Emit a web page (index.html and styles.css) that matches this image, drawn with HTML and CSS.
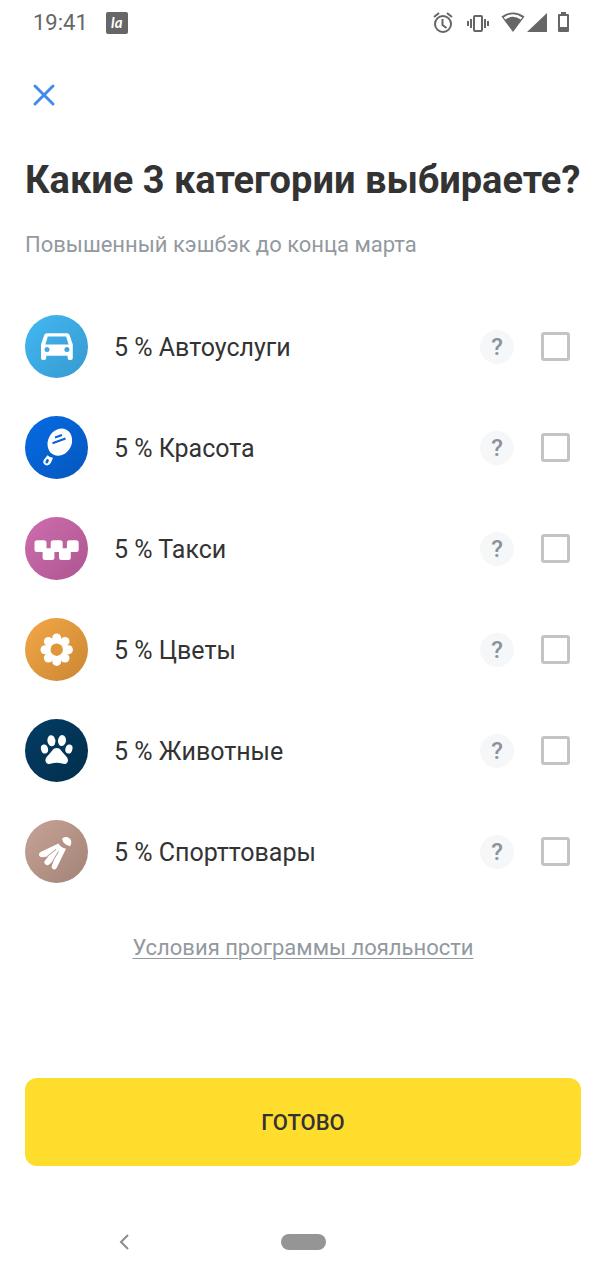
FILE: index.html
```html
<!DOCTYPE html>
<html lang="ru">
<head>
<meta charset="utf-8">
<meta name="viewport" content="width=device-width, initial-scale=1">
<title>Категории кэшбэка</title>
<link rel="stylesheet" href="styles.css">
</head>
<body>
<div class="screen">
  <header class="status">
    <div class="status-group">
      <time class="clock">19:41</time>
      <span class="badge">la</span>
    </div>
    <svg class="status-icons" width="140" height="24" viewBox="0 0 140 24" aria-hidden="true">
      <g fill="none" stroke="#666" stroke-width="2">
        <circle cx="13" cy="13" r="8"/>
        <path d="M12.500 8v6l4 3M4 6l5-4M22 6l-5-4"/>
        <rect x="44" y="5" width="8" height="15" rx="1"/>
        <path d="M41 8v9M38 10v5M55 8v9M58 10v5"/>
        <path d="M129 4h9v16h-9z" stroke-linejoin="round"/>
      </g>
      <g fill="#666">
        <path d="M71.500 5.500Q83-2.500 94.500 5.500L83 21z"/>
        <path d="M97 21L117 2v19zM131 1h5v3h-5zM128 16h11v4h-11z"/>
      </g>
      <path d="M74.500 7.500Q83 1.500 91.500 7.500" fill="none" stroke="#fff" stroke-width="2.500"/>
    </svg>
  </header>
  <main class="content">
    <button class="close" type="button" aria-label="Закрыть">
      <svg width="24" height="24" viewBox="0 0 24 24"><path d="M3 3l18 18M21 3L3 21" stroke="#438bea" stroke-width="3" stroke-linecap="round"/></svg>
    </button>
    <h1 class="title">Какие 3 категории выбираете?</h1>
    <p class="subtitle">Повышенный кэшбэк до конца марта</p>
    <ul class="list">
      <li class="row">
        <svg class="icon icon-auto" viewBox="0 0 63 63" aria-hidden="true">
          <path fill="#fff" fill-rule="evenodd" d="M22 18.200h20q2 0 2.600 1.800l3.200 9.500V43q0 2-2 2h-1.200q-2 0-2-2v-2.200H21.200V43q0 2-2 2H18q-2 0-2-2V29.500l3.300-9.500q.6-1.800 2.700-1.800zM22.800 21.500l-2.500 8h23.300l-2.500-8zM22 32a2.500 2.500 0 1 0 0 5 2.500 2.500 0 0 0 0-5zM41.900 32a2.500 2.500 0 1 0 0 5 2.500 2.500 0 0 0 0-5z"/>
        </svg>
        <label class="name" for="c1">5 % Автоуслуги</label>
        <button class="help" type="button" aria-label="Подробнее: Автоуслуги">?</button>
        <input class="check" id="c1" type="checkbox">
      </li>
      <li class="row">
        <svg class="icon icon-beauty" viewBox="0 0 63 63" aria-hidden="true">
          <ellipse cx="34.800" cy="26.200" rx="11.800" ry="14" transform="rotate(28 34.800 26.200)" fill="#fff"/>
          <path d="M30 21.500l7-2.500M27.500 27.300l13-4.800" stroke="#0765d8" stroke-width="2"/>
          <path d="M22.500 39.300Q24.500 41.500 28 41.800L25.800 47Q23.500 50.500 20.300 49Q17.300 47.300 18.700 44z" fill="#fff"/>
          <path d="M22.500 44.500l-.7 1.500" stroke="#0765d8" stroke-width="2.800" stroke-linecap="round"/>
        </svg>
        <label class="name" for="c2">5 % Красота</label>
        <button class="help" type="button" aria-label="Подробнее: Красота">?</button>
        <input class="check" id="c2" type="checkbox">
      </li>
      <li class="row">
        <svg class="icon icon-taxi" viewBox="0 0 63 63" aria-hidden="true">
          <g fill="#fff">
            <rect x="9.500" y="23.300" width="12" height="11.700" rx="2.500"/>
            <rect x="25.700" y="23.300" width="12" height="11.700" rx="2.500"/>
            <rect x="41.900" y="23.300" width="11.800" height="11.700" rx="2.500"/>
            <rect x="17.600" y="31.200" width="11.800" height="11.800" rx="2.500"/>
            <rect x="34" y="31.200" width="11.800" height="11.800" rx="2.500"/>
          </g>
        </svg>
        <label class="name" for="c3">5 % Такси</label>
        <button class="help" type="button" aria-label="Подробнее: Такси">?</button>
        <input class="check" id="c3" type="checkbox">
      </li>
      <li class="row">
        <svg class="icon icon-flowers" viewBox="0 0 63 63" aria-hidden="true">
          <g fill="#fff">
            <circle cx="31.700" cy="20" r="4.500"/><circle cx="40" cy="23.400" r="4.500"/>
            <circle cx="43.400" cy="31.700" r="4.500"/><circle cx="40" cy="40" r="4.500"/>
            <circle cx="31.700" cy="43.400" r="4.500"/><circle cx="23.400" cy="40" r="4.500"/>
            <circle cx="20" cy="31.700" r="4.500"/><circle cx="23.400" cy="23.400" r="4.500"/>
            <circle cx="31.700" cy="31.700" r="11.500"/>
          </g>
          <circle cx="31.700" cy="31.700" r="6.200" fill="#e0973a"/>
        </svg>
        <label class="name" for="c4">5 % Цветы</label>
        <button class="help" type="button" aria-label="Подробнее: Цветы">?</button>
        <input class="check" id="c4" type="checkbox">
      </li>
      <li class="row">
        <svg class="icon icon-pets" viewBox="0 0 63 63" aria-hidden="true">
          <g fill="#fff">
            <ellipse cx="19.500" cy="30" rx="3.500" ry="4.600" transform="rotate(-15 19.500 30)"/>
            <ellipse cx="26.400" cy="21.800" rx="4" ry="5.500" transform="rotate(-8 26.400 21.800)"/>
            <ellipse cx="37" cy="21.600" rx="4" ry="5.500" transform="rotate(8 37 21.600)"/>
            <ellipse cx="43.900" cy="30" rx="3.500" ry="4.600" transform="rotate(15 43.900 30)"/>
            <path d="M31.700 29C35.500 29 36.500 32.500 39.500 35.500C42 38 43.300 39.500 42.900 42C42.400 45 39.500 45.500 37 44.600Q31.700 43 26.400 44.600C24 45.500 21 45 20.500 42C20.100 39.500 21.400 38 23.900 35.500C26.900 32.500 27.900 29 31.700 29z"/>
          </g>
        </svg>
        <label class="name" for="c5">5 % Животные</label>
        <button class="help" type="button" aria-label="Подробнее: Животные">?</button>
        <input class="check" id="c5" type="checkbox">
      </li>
      <li class="row">
        <svg class="icon icon-sport" viewBox="0 0 63 63" aria-hidden="true">
          <g fill="#fff">
            <path d="M37 19C38.500 16.300 42.500 16.300 45 18.800C47 21.500 46.500 24.500 44.800 26.200Q38.500 24.500 37 19z"/>
            <path d="M33.500 23.500Q36 27.800 41 28.800L31.800 47.800Q30.500 50.300 28.200 49.300Q26 48.200 26.800 45.700L29 40L24.500 44.300Q22.300 46 20.300 44.300Q18.500 42.500 20.200 40.200L23.500 36.300L17.500 37.300Q15 37.500 14 35.500Q13.500 33.300 15.500 32z"/>
          </g>
          <path d="M31 29.500L22 36.500M33.500 31.500L27.500 41.500" fill="none" stroke="#b8968a" stroke-width="1"/>
        </svg>
        <label class="name" for="c6">5 % Спорттовары</label>
        <button class="help" type="button" aria-label="Подробнее: Спорттовары">?</button>
        <input class="check" id="c6" type="checkbox">
      </li>
    </ul>
    <a class="terms" href="#">Условия программы лояльности</a>
    <button class="done" type="button">ГОТОВО</button>
  </main>
  <nav class="navbar">
    <button class="back" type="button" aria-label="Назад">
      <svg width="12" height="18" viewBox="0 0 12 18"><path d="M10 2L3 9l7 7" fill="none" stroke="#8c8c8c" stroke-width="2"/></svg>
    </button>
    <button class="home" type="button" aria-label="Домой"></button>
  </nav>
</div>
</body>
</html>
```

FILE: styles.css
```css
* { box-sizing: border-box; }
body {
  margin: 0;
  background: #fff;
  color: #333;
  font-family: Roboto, "Noto Sans", sans-serif;
}
button {
  padding: 0;
  border: 0;
  background: none;
  font: inherit;
  color: inherit;
}
.screen {
  display: flex;
  flex-direction: column;
  min-height: 100vh;
}
.status {
  display: flex;
  justify-content: space-between;
  align-items: center;
  height: 45px;
  padding: 0 36px 0 33px;
}
.status-group {
  display: flex;
  align-items: center;
  gap: 18px;
}
.clock {
  font-size: 22px;
  color: #666;
}
.badge {
  width: 22px;
  height: 22px;
  border-radius: 2px;
  background: #666;
  color: #fff;
  font: italic 700 15px/20px Lato, sans-serif;
  text-align: center;
}
.status-icons { display: block; }
.content {
  display: flex;
  flex-direction: column;
  flex: 1;
  padding: 38px 25px 0;
}
.close {
  width: 24px;
  height: 24px;
  margin-left: 7px;
}
.close svg, .back svg { display: block; }
.title {
  margin: 50px 0 0;
  font-size: 38px;
  line-height: 46px;
  font-weight: 700;
  white-space: nowrap;
}
.subtitle {
  margin: 28px 0 0;
  font-size: 22px;
  line-height: 28px;
  color: #9299a0;
}
.list {
  display: flex;
  flex-direction: column;
  gap: 38px;
  margin: 56px 0 0;
  padding: 0;
  list-style: none;
}
.row {
  display: flex;
  align-items: center;
  padding-right: 11px;
}
.icon {
  flex: none;
  width: 63px;
  height: 63px;
  border-radius: 50%;
}
.icon-auto { background: linear-gradient(135deg, #42b8f2, #3799d0); }
.icon-beauty { background: linear-gradient(135deg, #056be5, #0557bd); }
.icon-taxi { background: linear-gradient(135deg, #ce6dae, #ac5690); }
.icon-flowers { background: linear-gradient(135deg, #f3a847, #ca8632); }
.icon-pets { background: linear-gradient(135deg, #033c63, #022f4d); }
.icon-sport { background: linear-gradient(135deg, #c6a396, #a38377); }
.name {
  flex: 1;
  margin-left: 26px;
  padding-top: 3px;
  font-size: 25px;
  line-height: 32px;
}
.help {
  width: 34px;
  height: 34px;
  border-radius: 50%;
  background: #f5f7f9;
  color: #8c9299;
  font-size: 24px;
  font-weight: 500;
  line-height: 34px;
}
.check {
  appearance: none;
  width: 29px;
  height: 29px;
  margin: 0 0 0 27px;
  border: 3px solid #c4c4c6;
  border-radius: 3px;
}
.check:checked { background: #ffdd2d; }
.terms {
  align-self: center;
  margin-top: 51px;
  font-size: 22px;
  line-height: 28px;
  color: #9299a0;
  text-decoration-thickness: 1px;
  text-underline-offset: 3px;
}
.done {
  height: 88px;
  margin-top: auto;
  border-radius: 12px;
  background: #ffdd2d;
  font-size: 22px;
  font-weight: 500;
}
.navbar {
  display: grid;
  grid-template-columns: 1fr auto 1fr;
  align-items: center;
  height: 76px;
  margin-top: 38px;
}
.back { justify-self: start; margin-left: 118px; }
.home {
  width: 45px;
  height: 16px;
  border-radius: 8px;
  background: #959595;
}
```
